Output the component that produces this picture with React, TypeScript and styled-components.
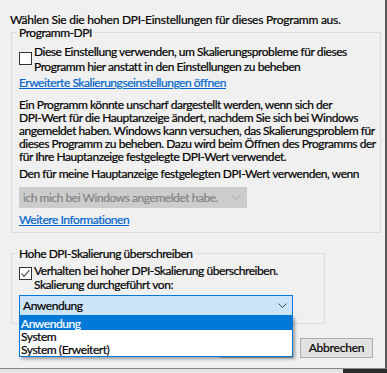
import React from "react";
import styled, { createGlobalStyle } from "styled-components";

const Global = createGlobalStyle`
  html, body { margin: 0; padding: 0; background: #f0f0f0; }
  body {
    font-family: Lato, "Noto Sans", sans-serif;
    font-size: 12px;
    letter-spacing: -0.45px;
    color: #000;
    -webkit-text-stroke: 0.2px currentColor;
  }
  * { box-sizing: border-box; }
`;

const Screen = styled.div`
  width: 387px;
  height: 373px;
  display: flex;
  flex-direction: column;
  overflow: hidden;
`;

const Window = styled.div`
  width: 387px;
  height: 369px;
  background: #f0f0f0;
  border-right: 2px solid #5a5a5a;
  border-bottom: 1px solid #8a8a8a;
  padding: 12px 0 0 0;
  display: flex;
  flex-direction: column;
`;

const BottomStrip = styled.div`
  flex: 1;
  display: flex;
`;

const StripLight = styled.div`
  flex: 1;
  background: #e4e4e4;
`;

const StripDark = styled.div`
  width: 44px;
  background: #2b2b2b;
`;

const Intro = styled.div`
  margin-left: 10px;
  line-height: 15px;
  letter-spacing: -0.26px;
  white-space: nowrap;
`;

const GroupBox = styled.div<{ $w: number; $mt: number; $pt: number; $pb: number }>`
  position: relative;
  margin-left: 11px;
  margin-top: ${(p) => p.$mt}px;
  width: ${(p) => p.$w}px;
  border: 1px solid #dcdcdc;
  padding: ${(p) => p.$pt}px 6px ${(p) => p.$pb}px 7px;
  display: flex;
  flex-direction: column;
  align-items: flex-start;
`;

const Legend = styled.div`
  position: absolute;
  top: -8px;
  left: 5px;
  padding: 0 2px 0 2px;
  background: #f0f0f0;
  line-height: 15px;
  white-space: nowrap;
`;

const CheckRow = styled.div<{ $lh: number; $boxTop: number }>`
  display: flex;
  align-items: flex-start;
  gap: 2px;
  line-height: ${(p) => p.$lh}px;
  & > span:first-child { margin-top: ${(p) => p.$boxTop}px; }
`;

const Box = styled.span`
  width: 13px;
  height: 13px;
  flex: none;
  border: 1px solid #333;
  background: #fff;
  display: flex;
  align-items: center;
  justify-content: center;
`;

const Label = styled.div`
  white-space: nowrap;
`;

const Link = styled.a<{ $mt: number }>`
  display: block;
  margin-top: ${(p) => p.$mt}px;
  color: #0066cc;
  text-decoration: underline;
  line-height: 15px;
  white-space: nowrap;
  cursor: pointer;
`;

const Para = styled.div<{ $mt: number }>`
  margin-top: ${(p) => p.$mt}px;
  line-height: 13px;
  white-space: nowrap;
`;

const Combo = styled.div<{ $w: number; $mt: number; $active?: boolean }>`
  position: relative;
  margin-top: ${(p) => p.$mt}px;
  width: ${(p) => p.$w}px;
  height: 21px;
  border: 1px solid ${(p) => (p.$active ? "#0078d7" : "#cccccc")};
  background: ${(p) => (p.$active ? "#cce4f7" : "#cccccc")};
  color: ${(p) => (p.$active ? "#000" : "#838383")};
  display: flex;
  align-items: center;
  justify-content: space-between;
  padding: 0 5px 0 3px;
  line-height: 15px;
  white-space: nowrap;
`;

const DropList = styled.div`
  position: absolute;
  top: 20px;
  left: -1px;
  width: 274px;
  border: 1px solid #0078d7;
  background: #fff;
  box-shadow: 2px 2px 3px rgba(0, 0, 0, 0.35);
  z-index: 5;
  color: #000;
`;

const Item = styled.div<{ $sel?: boolean }>`
  height: 13px;
  line-height: 13px;
  padding-left: 1px;
  background: ${(p) => (p.$sel ? "#0078d7" : "#fff")};
  color: ${(p) => (p.$sel ? "#fff" : "#000")};
`;

const ButtonRow = styled.div`
  margin-top: 14px;
  display: flex;
  justify-content: flex-end;
  gap: 7px;
  padding-right: 12px;
`;

const Button = styled.button`
  width: 73px;
  height: 20px;
  background: #e1e1e1;
  border: 1px solid #adadad;
  font: inherit;
  font-size: 12px;
  letter-spacing: -0.2px;
  color: #000;
  padding: 0;
  line-height: 16px;
`;

const Chevron = ({ color }: { color: string }) => (
  <svg width="9" height="5" viewBox="0 0 9 5">
    <polyline points="0.5,0.5 4.5,4.5 8.5,0.5" fill="none" stroke={color} strokeWidth="1" />
  </svg>
);

export default function App() {
  return (
    <Screen>
      <Global />
      <Window>
        <Intro>Wählen Sie die hohen DPI-Einstellungen für dieses Programm aus.</Intro>
        <GroupBox $w={370} $mt={5} $pt={12} $pb={5}>
          <Legend>Programm-DPI</Legend>
          <CheckRow $lh={14.5} $boxTop={7}>
            <Box />
            <Label>
              Diese Einstellung verwenden, um Skalierungsprobleme für dieses
              <br />
              Programm hier anstatt in den Einstellungen zu beheben
            </Label>
          </CheckRow>
          <Link $mt={1}>Erweiterte Skalierungseinstellungen öffnen</Link>
          <Para $mt={8}>
            Ein Programm könnte unscharf dargestellt werden, wenn sich der
            <br />
            DPI-Wert für die Hauptanzeige ändert, nachdem Sie sich bei Windows
            <br />
            angemeldet haben. Windows kann versuchen, das Skalierungsproblem für
            <br />
            dieses Programm zu beheben. Dazu wird beim Öffnen des Programms der
            <br />
            für Ihre Hauptanzeige festgelegte DPI-Wert verwendet.
          </Para>
          <Para $mt={4}>Den für meine Hauptanzeige festgelegten DPI-Wert verwenden, wenn</Para>
          <Combo $w={228} $mt={7}>
            <span>ich mich bei Windows angemeldet habe.</span>
            <Chevron color="#a6a6a6" />
          </Combo>
          <Link $mt={4}>Weitere Informationen</Link>
        </GroupBox>
        <GroupBox $w={314} $mt={20} $pt={10} $pb={7}>
          <Legend>Hohe DPI-Skalierung überschreiben</Legend>
          <CheckRow $lh={13.5} $boxTop={3}>
            <Box>
              <svg width="11" height="11" viewBox="0 0 11 11">
                <polyline points="1.5,5.5 4,8.5 9.5,2" fill="none" stroke="#333" strokeWidth="1.1" />
              </svg>
            </Box>
            <Label>
              Verhalten bei hoher DPI-Skalierung überschreiben.
              <br />
              Skalierung durchgeführt von:
            </Label>
          </CheckRow>
          <Combo $w={274} $mt={4} $active>
            <span>Anwendung</span>
            <Chevron color="#444" />
            <DropList>
              <Item $sel>Anwendung</Item>
              <Item>System</Item>
              <Item>System (Erweitert)</Item>
            </DropList>
          </Combo>
        </GroupBox>
        <ButtonRow>
          <Button>OK</Button>
          <Button>Abbrechen</Button>
        </ButtonRow>
      </Window>
      <BottomStrip>
        <StripLight />
        <StripDark />
      </BottomStrip>
    </Screen>
  );
}
